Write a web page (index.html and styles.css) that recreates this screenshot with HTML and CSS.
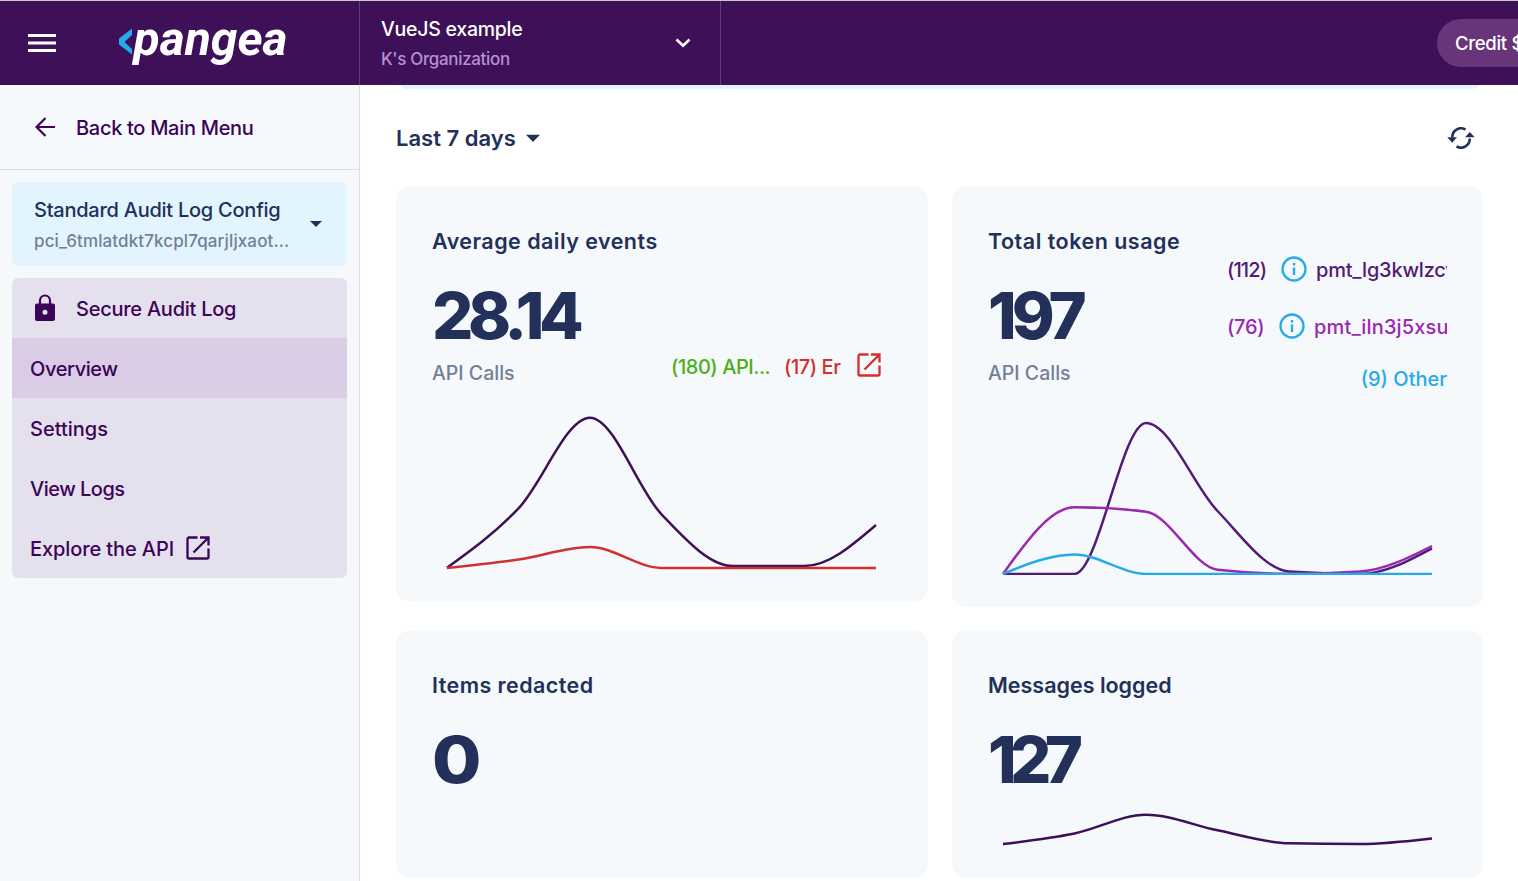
FILE: index.html
```html
<!DOCTYPE html>
<html lang="en">
<head>
<meta charset="utf-8">
<title>Pangea Console</title>
<link rel="stylesheet" href="styles.css">
</head>
<body>
<div class="app">
  <header class="topbar">
    <div class="brand">
      <svg class="menu-icon" width="28" height="20" viewBox="0 0 28 20"><path d="M0 2.500h28M0 10h28M0 17.500h28" stroke="#fff" stroke-width="2.800"/></svg>
      <svg class="logo" width="180" height="56" viewBox="0 0 180 56">
        <path d="M14 13.500V20L6.500 27L14 34V39.500L1 29.500V23.500Z" fill="#27aae9"/>
        <text class="logo-text" x="15.500" y="40" textLength="154" lengthAdjust="spacingAndGlyphs">pangea</text>
      </svg>
    </div>
    <div class="project">
      <div>
        <div class="project-name">VueJS example</div>
        <div class="project-org">K's Organization</div>
      </div>
      <svg width="16" height="10" viewBox="0 0 16 10"><path d="M1.500 1.500L8 7.700L14.500 1.500" fill="none" stroke="#fff" stroke-width="2.600"/></svg>
    </div>
    <div class="credit">Credit $</div>
  </header>
  <div class="body">
    <aside class="sidebar">
      <div class="back">
        <svg width="20" height="20" viewBox="0 0 20 20"><path d="M20 10H2M10.500 1L1.500 10L10.500 19" fill="none" stroke="#3b0458" stroke-width="2.200"/></svg>
        <span class="t-back">Back to Main Menu</span>
      </div>
      <div class="config">
        <div>
          <div class="config-name">Standard Audit Log Config</div>
          <div class="config-id">pci_6tmlatdkt7kcpl7qarjljxaot...</div>
        </div>
        <svg width="12" height="7" viewBox="0 0 12 7"><path d="M0 0h12L6 6Z" fill="#22305a"/></svg>
      </div>
      <nav class="nav">
        <div class="nav-head">
          <svg width="20" height="28" viewBox="0 0 20 28"><path d="M5 10V6.500a5 5 0 0 1 10 0V10" fill="none" stroke="#3b0458" stroke-width="2.200"/><path fill-rule="evenodd" fill="#3b0458" d="M2 9.500H18a2 2 0 0 1 2 2V25a2 2 0 0 1-2 2H2a2 2 0 0 1-2-2V11.500a2 2 0 0 1 2-2ZM10 15.700a2.500 2.500 0 1 0 0 5a2.500 2.500 0 1 0 0-5Z"/></svg>
          <span class="t-secure">Secure Audit Log</span>
        </div>
        <div class="nav-item active"><span class="t-over">Overview</span></div>
        <div class="nav-item"><span class="t-set">Settings</span></div>
        <div class="nav-item"><span class="t-view">View Logs</span></div>
        <div class="nav-item"><span class="t-expl">Explore the API</span>
          <svg class="ext" width="24" height="24" viewBox="0 0 24 24"><path d="M11.500 1.500H3a1.500 1.500 0 0 0-1.500 1.500V21A1.500 1.500 0 0 0 3 22.500H21A1.500 1.500 0 0 0 22.500 21V12.500M14 1.500H22.500V9.500M22 2L7.500 16.500" fill="none" stroke="#3b0458" stroke-width="2.300"/></svg>
        </div>
      </nav>
    </aside>
    <main class="main">
      <div class="banner"></div>
      <div class="range">
        <div class="range-pick"><span class="t-range">Last 7 days</span>
          <svg width="14" height="8" viewBox="0 0 14 8"><path d="M0 .8h14L7 8Z" fill="#22305a"/></svg>
        </div>
        <svg width="28" height="22" viewBox="0 0 28 22"><g fill="none" stroke="#22305a" stroke-width="2.600"><path d="M18.500 2.600A8.700 8.700 0 0 0 5.300 10.500"/><path d="M9.500 19.400A8.700 8.700 0 0 0 22.700 11.500"/></g><path d="M.3 10.300H10L5.200 15.800ZM27.700 10.300H18L22.800 5Z" fill="#22305a"/></svg>
      </div>
      <div class="grid">
        <section class="card events">
          <h2 class="t-avg">Average daily events</h2>
          <div class="num n-events">28.14</div>
          <div class="row">
            <span class="unit">API Calls</span>
            <span class="legend ok">(180) API...</span>
            <span class="legend err">(17) Er</span>
            <svg width="24" height="24" viewBox="0 0 24 24"><path d="M11.500 1.500H3a1.500 1.500 0 0 0-1.500 1.500V21A1.500 1.500 0 0 0 3 22.500H21A1.500 1.500 0 0 0 22.500 21V12.500M14 1.500H22.500V9.500M22 2L7.500 16.500" fill="none" stroke="#d32f2f" stroke-width="2.300"/></svg>
          </div>
          <svg class="chart" width="459" height="166" viewBox="0 0 459 166">
            <path class="line" stroke="#3d1057" data-y="158.700,99.300,8.700,105.300,157,157,116"/>
            <path class="line" stroke="#d32f2f" data-y="158.900,150.500,138,158.900,158.900,158.900,158.900"/>
          </svg>
        </section>
        <section class="card tokens">
          <div class="tokens-head">
            <div>
              <h2 class="t-tok">Total token usage</h2>
              <div class="num n-tokens">197</div>
              <div class="row"><span class="unit">API Calls</span></div>
            </div>
            <div class="pmts">
              <div class="pmt p1"><span class="c1">(112)</span>
                <svg width="26" height="26" viewBox="0 0 26 26"><circle cx="13" cy="13" r="11.500" fill="none" stroke="#27aae9" stroke-width="2.300"/><path d="M13 11.500V19M13 7V9.500" stroke="#27aae9" stroke-width="2.400"/></svg>
                <span class="token k1">pmt_lg3kwlzcv</span></div>
              <div class="pmt p2"><span class="c2">(76)</span>
                <svg width="26" height="26" viewBox="0 0 26 26"><circle cx="13" cy="13" r="11.500" fill="none" stroke="#27aae9" stroke-width="2.300"/><path d="M13 11.500V19M13 7V9.500" stroke="#27aae9" stroke-width="2.400"/></svg>
                <span class="token k2">pmt_iln3j5xsu</span></div>
              <div class="pmt p3"><span class="c3">(9) Other</span></div>
            </div>
          </div>
          <svg class="chart" width="459" height="166" viewBox="0 0 459 166">
            <path class="line" stroke="#531a76" data-y="164.900,164.900,14,102,162.500,164.900,139.300"/>
            <path class="line" stroke="#9c27b0" data-y="164.900,98.200,102.700,160.700,164.700,162.500,137"/>
            <path class="line" stroke="#27aae9" data-y="164.900,145.500,164.900,164.900,164.900,164.900,164.900"/>
          </svg>
        </section>
        <section class="card small">
          <h2 class="t-items">Items redacted</h2>
          <div class="num n-items"><span>0</span></div>
        </section>
        <section class="card small">
          <h2 class="t-msg">Messages logged</h2>
          <div class="num n-msg">127</div>
          <svg class="chart" width="459" height="50" viewBox="0 0 459 50">
            <path class="line" stroke="#3d1057" data-y="39,28.500,9.700,25.300,38.300,39,33.500"/>
          </svg>
        </section>
      </div>
    </main>
  </div>
</div>
<script src="charts.js"></script>
</body>
</html>
```
FILE: styles.css
```css
* { box-sizing: border-box; }
body {
  margin: 0;
  width: 1518px;
  height: 881px;
  overflow: hidden;
  background: #fff;
  color: #22305a;
  font-family: Inter, "Liberation Sans", sans-serif;
  font-size: 20px;
  font-weight: 450;
  white-space: nowrap;
}
svg { display: block; flex: none; }
.app { height: 881px; display: flex; flex-direction: column; overflow: hidden; }

.topbar {
  flex: none;
  height: 85px;
  display: flex;
  align-items: center;
  background: #3d1057;
  border-top: 1px solid #c9c8cf;
  color: #fff;
}
.brand { flex: none; width: 360px; height: 84px; display: flex; align-items: center; padding-left: 28px; border-right: 1px solid #643a7b; }
.logo { margin-left: 62px; }
.logo-text { font: italic 700 48px Roboto, sans-serif; fill: #fff; }
.project { flex: none; width: 361px; height: 84px; display: flex; align-items: center; justify-content: space-between; padding: 0 29px 0 21px; border-right: 1px solid #643a7b; }
.project-name { font-size: 19.500px; font-weight: 500; line-height: 30px; letter-spacing: -0.250px; padding-top: 3px; }
.project-org { font-size: 17px; line-height: 31px; color: #b690d0; font-weight: 500; letter-spacing: -0.350px; }
.credit { flex: none; width: 180px; height: 48px; margin-left: 716px; padding-left: 18px; border-radius: 24px; background: #68357b; line-height: 49px; font-size: 18.500px; font-weight: 500; letter-spacing: -0.300px; }

.body { flex: 1; display: flex; min-height: 0; }
.sidebar { flex: none; width: 360px; background: #f5f9fc; border-right: 1px solid #dadfe3; color: #3b0458; }
.back { height: 85px; display: flex; align-items: center; gap: 21px; padding-left: 35px; border-bottom: 1px solid #dadfe3; }
.back span, .nav span { padding-top: 2px; }
.t-back { letter-spacing: -0.300px; }
.t-secure { letter-spacing: -0.250px; }
.t-over { letter-spacing: -0.400px; }
.t-view { letter-spacing: -0.500px; }
.t-expl { letter-spacing: -0.100px; }
.config { width: 335px; height: 84px; margin: 12px; padding: 0 25px 0 22px; border-radius: 6px; background: #e2f5fe; display: flex; align-items: center; justify-content: space-between; color: #22305a; }
.config-name { line-height: 31px; padding-top: 4px; letter-spacing: -0.250px; }
.config-id { line-height: 31px; font-size: 17px; color: #737f98; letter-spacing: 0.120px; }
.nav { width: 335px; margin-left: 12px; border-radius: 6px; background: #e5e0ed; overflow: hidden; }
.nav-head, .nav-item { height: 60px; display: flex; align-items: center; }
.nav-head { padding-left: 23px; gap: 21px; }
.nav-item { padding-left: 18px; gap: 12px; }
.active { background: #dacce5; }

.main { flex: 1; padding: 0 35px 0 36px; }
.banner { height: 4px; background: #e2f5fe; clip-path: inset(-30px 0 0 0 round 12px); }
.range { height: 98px; display: flex; align-items: center; justify-content: space-between; padding-right: 8px; }
.range-pick { display: flex; align-items: center; gap: 10px; }
.t-range { font-size: 22px; font-weight: 600; }
.grid { display: grid; grid-template-columns: 532px 531px; column-gap: 24px; row-gap: 24px; align-items: start; }
.card { border-radius: 13px; background: #f5f9fc; padding: 36px 36px 0; overflow: hidden; }
.events { height: 414px; }
.tokens { height: 420px; }
.small { height: 246px; }
h2 { margin: 0; font-size: 21.500px; line-height: 36px; font-weight: 600; }
.t-avg { letter-spacing: 0.470px; }
.t-tok { letter-spacing: 0.500px; }
.t-items { letter-spacing: 0.430px; }
.num { height: 92px; line-height: 113px; font-size: 65px; font-weight: 800; letter-spacing: -5px; }
.n-events { letter-spacing: -5.500px; }
.n-msg { letter-spacing: -6.700px; }
.n-items span { display: inline-block; transform: scaleX(1.1); transform-origin: 0 50%; }
.row { height: 42px; display: flex; align-items: center; }
.unit { color: #737f98; width: 239px; font-size: 19.500px; padding-top: 1px; }
.legend { line-height: 28px; padding-bottom: 10px; }
.row > svg { margin-bottom: 14px; }
.ok { color: #4caf16; width: 113px; letter-spacing: -0.450px; }
.err { color: #d32f2f; width: 73px; letter-spacing: -0.450px; }
.chart { margin-top: 16px; }
.small .chart { margin-top: 10px; }
.line { fill: none; stroke-width: 2.500; }
.tokens-head { display: flex; justify-content: space-between; }
.tokens-head > div:first-child { width: 230px; }
.pmts { width: 220px; padding-top: 33px; }
.pmt { display: flex; align-items: center; height: 26px; }
.pmt span { padding-top: 2px; }
.p1 { color: #531a76; }
.p2 { color: #9c27b0; margin-top: 31px; }
.p3 { color: #27aae9; margin-top: 26px; justify-content: flex-end; }
.c1 { width: 54px; letter-spacing: -0.900px; }
.c2 { width: 52px; letter-spacing: -0.300px; }
.token { margin-left: 9px; flex: 1; min-width: 0; overflow: hidden; }
.k1 { letter-spacing: -0.200px; }
.k2 { letter-spacing: 0.150px; }
```
FILE: charts.js
```js
// Draws each series as a monotone cubic spline through evenly spaced points.
const STEP = 71.5;
const LEFT = 15;

function monotonePath(ys) {
  const n = ys.length;
  const s = ys.slice(1).map((y, i) => (y - ys[i]) / STEP);
  const m = new Array(n).fill(0);
  for (let i = 1; i < n - 1; i++) {
    const p = (s[i - 1] + s[i]) / 2;
    m[i] = (Math.sign(s[i - 1]) + Math.sign(s[i])) *
      Math.min(Math.abs(s[i - 1]), Math.abs(s[i]), 0.5 * Math.abs(p)) || 0;
  }
  m[0] = (3 * s[0] - m[1]) / 2;
  m[n - 1] = (3 * s[n - 2] - m[n - 2]) / 2;
  let d = `M${LEFT},${ys[0]}`;
  for (let i = 1; i < n; i++) {
    const x0 = LEFT + (i - 1) * STEP;
    const x1 = x0 + STEP;
    const k = STEP / 3;
    d += `C${x0 + k},${ys[i - 1] + k * m[i - 1]},${x1 - k},${ys[i] - k * m[i]},${x1},${ys[i]}`;
  }
  return d;
}

document.querySelectorAll(".line").forEach((el) => {
  el.setAttribute("d", monotonePath(el.dataset.y.split(",").map(Number)));
});
```
